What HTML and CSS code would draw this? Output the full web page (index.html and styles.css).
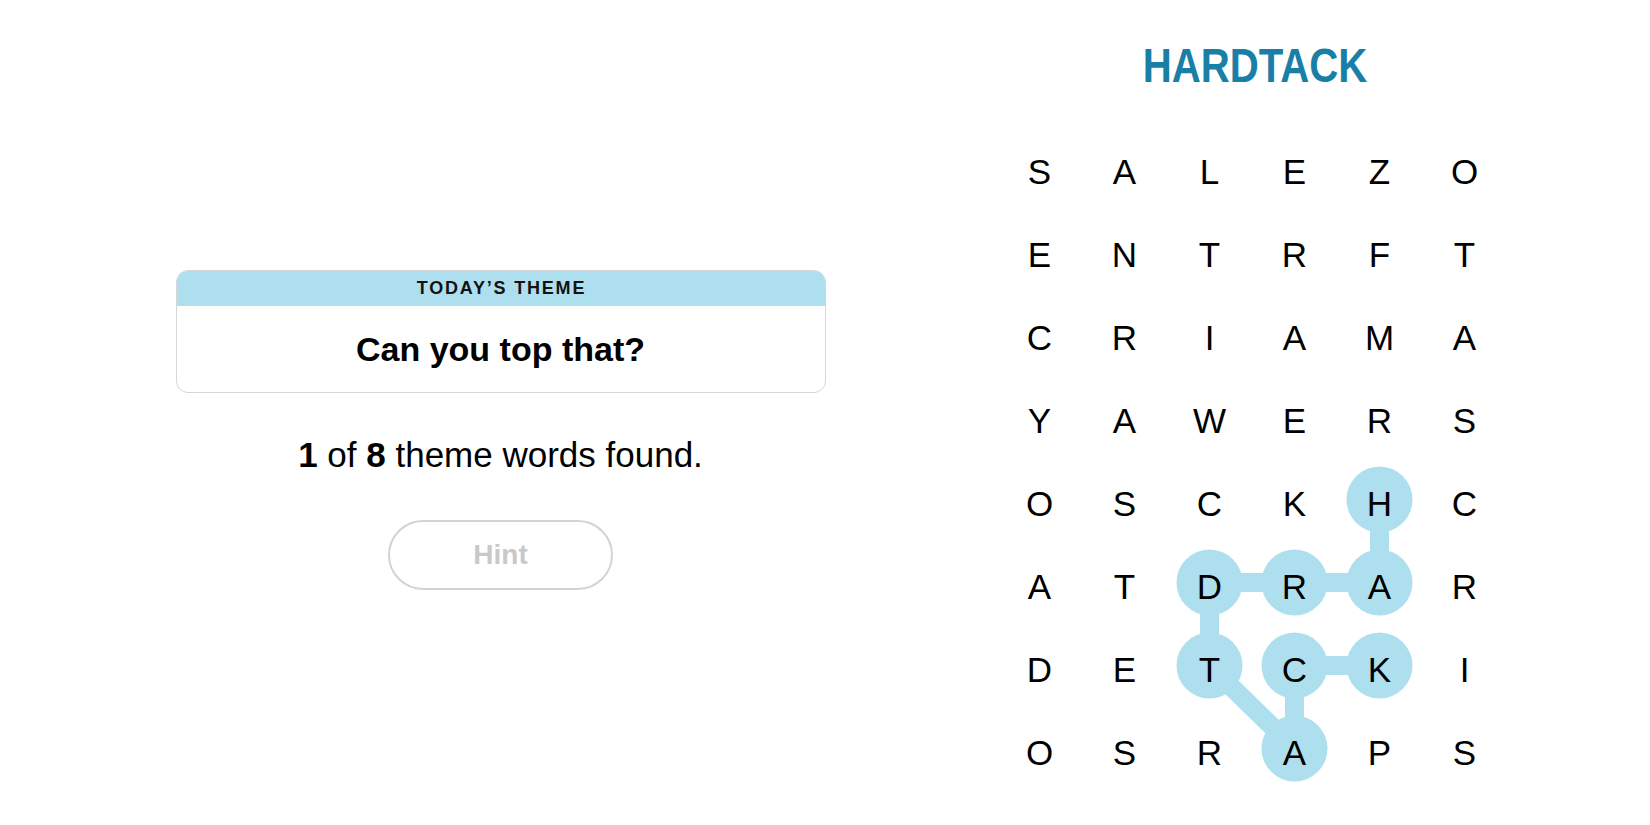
FILE: index.html
```html
<!DOCTYPE html>
<html lang="en">
<head>
<meta charset="utf-8">
<title>Strands</title>
<link rel="stylesheet" href="styles.css">
</head>
<body>
<main class="page">
  <section class="left">
    <div class="theme-card">
      <div class="theme-head">TODAY’S THEME</div>
      <div class="theme-body">Can you top that?</div>
    </div>
    <p class="progress"><b>1</b> of <b>8</b> theme words found.</p>
    <button class="hint" type="button">Hint</button>
  </section>
  <section class="right">
    <h1 class="found-word"><span class="found-text">HARDTACK</span></h1>
    <div class="board">
      <svg class="trail" width="510" height="664" viewBox="0 0 510 664" aria-hidden="true">
        <polyline points="382.5,369.5 382.5,452.5 297.5,452.5 212.5,452.5 212.5,535.5 297.5,618.5 297.5,535.5 382.5,535.5" fill="none" stroke="#aedfee" stroke-width="19" stroke-linejoin="round"/>
        <g fill="#aedfee">
          <circle cx="382.5" cy="369.5" r="33"/>
          <circle cx="382.5" cy="452.5" r="33"/>
          <circle cx="297.5" cy="452.5" r="33"/>
          <circle cx="212.5" cy="452.5" r="33"/>
          <circle cx="212.5" cy="535.5" r="33"/>
          <circle cx="297.5" cy="618.5" r="33"/>
          <circle cx="297.5" cy="535.5" r="33"/>
          <circle cx="382.5" cy="535.5" r="33"/>
        </g>
      </svg>
      <span>S</span><span>A</span><span>L</span><span>E</span><span>Z</span><span>O</span>
      <span>E</span><span>N</span><span>T</span><span>R</span><span>F</span><span>T</span>
      <span>C</span><span>R</span><span>I</span><span>A</span><span>M</span><span>A</span>
      <span>Y</span><span>A</span><span>W</span><span>E</span><span>R</span><span>S</span>
      <span>O</span><span>S</span><span>C</span><span>K</span><span>H</span><span>C</span>
      <span>A</span><span>T</span><span>D</span><span>R</span><span>A</span><span>R</span>
      <span>D</span><span>E</span><span>T</span><span>C</span><span>K</span><span>I</span>
      <span>O</span><span>S</span><span>R</span><span>A</span><span>P</span><span>S</span>
    </div>
  </section>
</main>
</body>
</html>
```
FILE: styles.css
```css
* { box-sizing: border-box; }

html, body {
  margin: 0;
  padding: 0;
  background: #ffffff;
}

body {
  width: 1650px;
  height: 825px;
  overflow: hidden;
  font-family: "Liberation Sans", Arial, sans-serif;
  color: #000000;
}

.page {
  display: flex;
  flex-direction: row;
  height: 825px;
}

.left {
  width: 997px;
  flex: 0 0 997px;
  display: flex;
  flex-direction: column;
  align-items: center;
  padding-top: 270px;
  padding-left: 4px;
}

.theme-card {
  width: 650px;
  border: 1px solid #d6d6d6;
  border-radius: 12px;
  overflow: hidden;
  background: #ffffff;
}

.theme-head {
  height: 35px;
  background: #aedfee;
  display: flex;
  align-items: center;
  justify-content: center;
  font-size: 18px;
  font-weight: 700;
  letter-spacing: 1.8px;
  color: #121212;
  padding-left: 2px;
}

.theme-body {
  height: 86px;
  display: flex;
  align-items: center;
  justify-content: center;
  font-size: 34px;
  font-weight: 700;
  color: #000000;
}

.progress {
  margin: 42px 0 0 0;
  height: 40px;
  line-height: 40px;
  font-size: 35px;
  color: #000000;
}

.progress b {
  font-weight: 700;
}

.hint {
  margin-top: 45px;
  width: 225px;
  height: 70px;
  border: 2px solid #d3d3d3;
  border-radius: 35px;
  background: #ffffff;
  font-family: "Liberation Sans", Arial, sans-serif;
  font-size: 28px;
  font-weight: 700;
  color: #c9c9c9;
  padding: 0;
}

.right {
  width: 510px;
  flex: 0 0 510px;
  display: flex;
  flex-direction: column;
  align-items: center;
  padding-top: 37px;
}

.found-word {
  margin: 0 0 37px 5px;
  height: 56px;
  line-height: 56px;
  font-family: "Liberation Sans", Arial, sans-serif;
  font-size: 49px;
  font-weight: 700;
  color: #1a7fa6;
}

.found-text {
  display: inline-block;
  transform: scaleX(0.82);
  transform-origin: center;
}

.board {
  position: relative;
  width: 510px;
  height: 664px;
  display: grid;
  grid-template-columns: repeat(6, 85px);
  grid-template-rows: repeat(8, 83px);
}

.trail {
  position: absolute;
  left: 0;
  top: 0;
  z-index: 0;
}

.board span {
  position: relative;
  z-index: 1;
  display: flex;
  align-items: center;
  justify-content: center;
  font-family: "Liberation Sans", Arial, sans-serif;
  font-size: 35px;
  font-weight: 400;
  color: #000000;
}
```
